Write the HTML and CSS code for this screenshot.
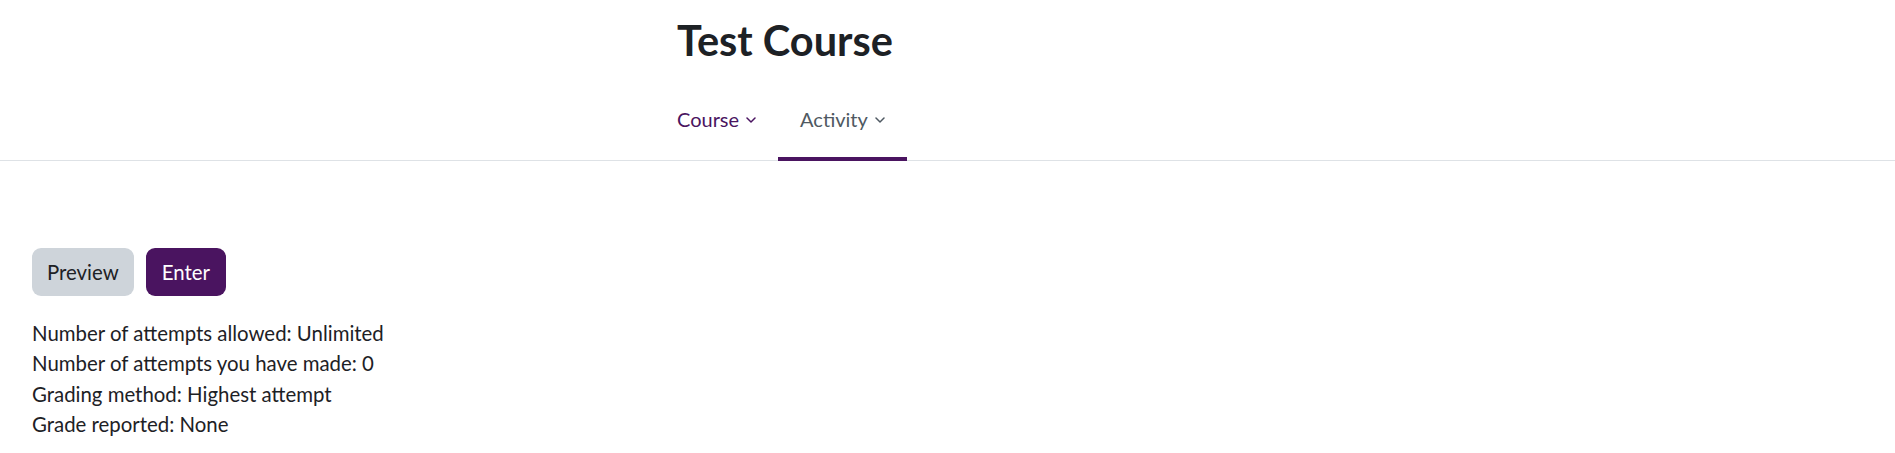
FILE: index.html
```html
<!DOCTYPE html>
<html lang="en">
<head>
<meta charset="utf-8">
<title>Test Course</title>
<link rel="stylesheet" href="styles.css">
</head>
<body>
<header class="page-header">
  <div class="header-inner">
    <h1 class="course-title">Test Course</h1>
    <nav class="secondary-nav">
      <a class="nav-item nav-course" href="#">Course<svg class="chev" viewBox="0 0 10 6" width="10" height="6"><path d="M1 1l4 4 4-4" fill="none" stroke="currentColor" stroke-width="1.5" stroke-linecap="round" stroke-linejoin="round"/></svg></a>
      <a class="nav-item nav-active" href="#">Activity<svg class="chev" viewBox="0 0 10 6" width="10" height="6"><path d="M1 1l4 4 4-4" fill="none" stroke="currentColor" stroke-width="1.5" stroke-linecap="round" stroke-linejoin="round"/></svg></a>
    </nav>
  </div>
</header>
<main class="content">
  <div class="actions">
    <button class="btn btn-secondary" type="button">Preview</button>
    <button class="btn btn-primary" type="button">Enter</button>
  </div>
  <div class="info">
    <div>Number of attempts allowed: Unlimited</div>
    <div>Number of attempts you have made: 0</div>
    <div>Grading method: Highest attempt</div>
    <div>Grade reported: None</div>
  </div>
</main>
</body>
</html>
```
FILE: styles.css
```css
* { box-sizing: border-box; }
html, body { margin: 0; padding: 0; background: #fff; }
body {
  font-family: Lato, "Noto Sans", sans-serif;
  font-size: 20.4px;
  line-height: 1.5;
  color: #1d2125;
}
.page-header {
  border-bottom: 1px solid #dee2e6;
}
.header-inner {
  padding-left: 677px;
}
.course-title {
  margin: 0;
  padding-top: 16px;
  font-size: 41.5px;
  font-weight: 700;
  line-height: 1.2;
  color: #1d2125;
}
.secondary-nav {
  display: flex;
  margin-top: 28px;
  margin-bottom: -1px;
}
.nav-item {
  display: flex;
  align-items: center;
  gap: 7px;
  padding: 10px 22px 23px;
  font-size: 20px;
  line-height: 30px;
  text-decoration: none;
  color: #4f5962;
  border-bottom: 4px solid transparent;
}
.nav-course {
  padding-left: 0;
  color: #4a1460;
}
.nav-active {
  border-bottom-color: #4a1460;
}
.chev { display: block; margin-top: 2px; }
.content {
  padding: 87px 32px 0;
}
.actions {
  display: flex;
  gap: 12px;
}
.btn {
  font-family: inherit;
  font-size: 20.4px;
  line-height: 30px;
  padding: 9px 15px;
  border: 0;
  border-radius: 9px;
}
.btn-secondary { background: #ced4da; color: #1d2125; }
.btn-primary { background: #4a1460; color: #fff; padding: 9px 16px; }
.info {
  margin-top: 22px;
  line-height: 30.5px;
}
```
